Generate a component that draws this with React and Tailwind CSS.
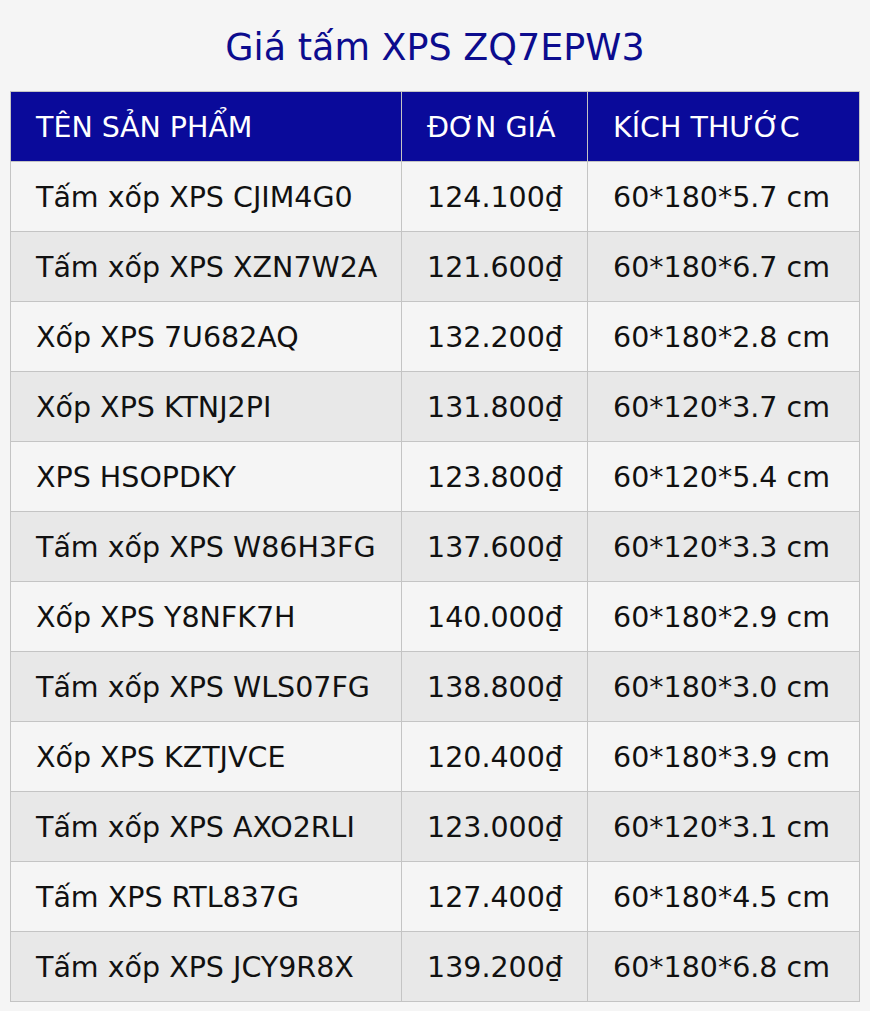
const rows = [
  ["Tấm xốp XPS CJIM4G0", "124.100₫", "60*180*5.7 cm"],
  ["Tấm xốp XPS XZN7W2A", "121.600₫", "60*180*6.7 cm"],
  ["Xốp XPS 7U682AQ", "132.200₫", "60*180*2.8 cm"],
  ["Xốp XPS KTNJ2PI", "131.800₫", "60*120*3.7 cm"],
  ["XPS HSOPDKY", "123.800₫", "60*120*5.4 cm"],
  ["Tấm xốp XPS W86H3FG", "137.600₫", "60*120*3.3 cm"],
  ["Xốp XPS Y8NFK7H", "140.000₫", "60*180*2.9 cm"],
  ["Tấm xốp XPS WLS07FG", "138.800₫", "60*180*3.0 cm"],
  ["Xốp XPS KZTJVCE", "120.400₫", "60*180*3.9 cm"],
  ["Tấm xốp XPS AXO2RLI", "123.000₫", "60*120*3.1 cm"],
  ["Tấm XPS RTL837G", "127.400₫", "60*180*4.5 cm"],
  ["Tấm xốp XPS JCY9R8X", "139.200₫", "60*180*6.8 cm"],
]

const App = () => {
  return (
    <div className="min-h-[1011px] w-full bg-[#f5f5f5] px-[10px] font-['DejaVu_Sans',sans-serif]">
      <h1 className="h-[91px] flex items-center justify-center pt-[6px] text-[36.5px] text-[#0c0c8e]">
        Giá tấm XPS ZQ7EPW3
      </h1>
      <table className="w-[849px] border-collapse table-fixed text-[28.5px]">
        <colgroup>
          <col className="w-[391px]" />
          <col className="w-[186px]" />
          <col className="w-[272px]" />
        </colgroup>
        <thead>
          <tr className="h-[70px] bg-[#0a0a9a] text-white">
            <th className="border border-[#c4c4c4] pl-[25px] pt-[4px] text-left font-normal">TÊN SẢN PHẨM</th>
            <th className="border border-[#c4c4c4] pl-[25px] pt-[4px] text-left font-normal">ĐƠN GIÁ</th>
            <th className="border border-[#c4c4c4] pl-[25px] pt-[4px] text-left font-normal">KÍCH THƯỚC</th>
          </tr>
        </thead>
        <tbody>
          {rows.map((r, i) => (
            <tr key={i} className={"h-[70px] text-[#111] " + (i % 2 ? "bg-[#e8e8e8]" : "bg-[#f5f5f5]")}>
              <td className="border border-[#c4c4c4] pl-[25px] pt-[4px]">{r[0]}</td>
              <td className="border border-[#c4c4c4] pl-[25px] pt-[4px]">{r[1]}</td>
              <td className="border border-[#c4c4c4] pl-[25px] pt-[4px]">{r[2]}</td>
            </tr>
          ))}
        </tbody>
      </table>
    </div>
  )
}

export default App
